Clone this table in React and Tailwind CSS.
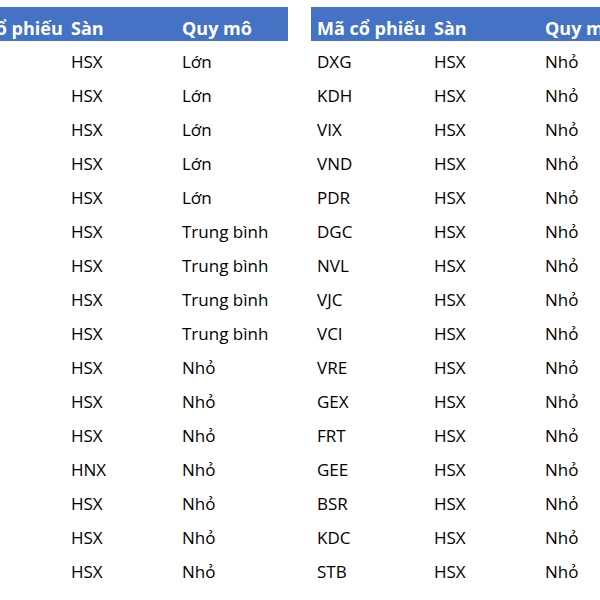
const left = [
  ["HSX", "Lớn"],
  ["HSX", "Lớn"],
  ["HSX", "Lớn"],
  ["HSX", "Lớn"],
  ["HSX", "Lớn"],
  ["HSX", "Trung bình"],
  ["HSX", "Trung bình"],
  ["HSX", "Trung bình"],
  ["HSX", "Trung bình"],
  ["HSX", "Nhỏ"],
  ["HSX", "Nhỏ"],
  ["HSX", "Nhỏ"],
  ["HNX", "Nhỏ"],
  ["HSX", "Nhỏ"],
  ["HSX", "Nhỏ"],
  ["HSX", "Nhỏ"],
];

const rightCodes = [
  "DXG", "KDH", "VIX", "VND", "PDR", "DGC", "NVL", "VJC",
  "VCI", "VRE", "GEX", "FRT", "GEE", "BSR", "KDC", "STB",
];

function Table({ rows }) {
  return (
    <div className="w-[340px] shrink-0">
      <div className="flex h-[34px] bg-[#4472c4] text-white font-bold text-[18px]">
        <div className="w-[117px] shrink-0 pl-[6px] pt-[8px] leading-[26px] whitespace-nowrap">Mã cổ phiếu</div>
        <div className="w-[111px] shrink-0 pl-[6px] pt-[8px] leading-[26px] whitespace-nowrap">Sàn</div>
        <div className="w-[112px] shrink-0 pl-[6px] pt-[8px] leading-[26px] whitespace-nowrap">Quy mô</div>
      </div>
      {rows.map((r, i) => (
        <div key={i} className="flex h-[34px] text-black text-[17px]">
          <div className="w-[117px] shrink-0 pl-[6px] pt-[8px] leading-[26px] whitespace-nowrap">{r[0]}</div>
          <div className="w-[111px] shrink-0 pl-[6px] pt-[8px] leading-[26px] whitespace-nowrap">{r[1]}</div>
          <div className="w-[112px] shrink-0 pl-[6px] pt-[8px] leading-[26px] whitespace-nowrap">{r[2]}</div>
        </div>
      ))}
    </div>
  );
}

export default function App() {
  const leftRows = left.map((r) => ["", r[0], r[1]]);
  const rightRows = rightCodes.map((c) => [c, "HSX", "Nhỏ"]);
  return (
    <div
      className="w-[600px] h-[600px] overflow-hidden bg-white"
      style={{ fontFamily: '"Open Sans", "Noto Sans", sans-serif' }}
    >
      <div className="flex gap-[23px] ml-[-52px] pt-[7px]">
        <Table rows={leftRows} />
        <Table rows={rightRows} />
      </div>
    </div>
  );
}
